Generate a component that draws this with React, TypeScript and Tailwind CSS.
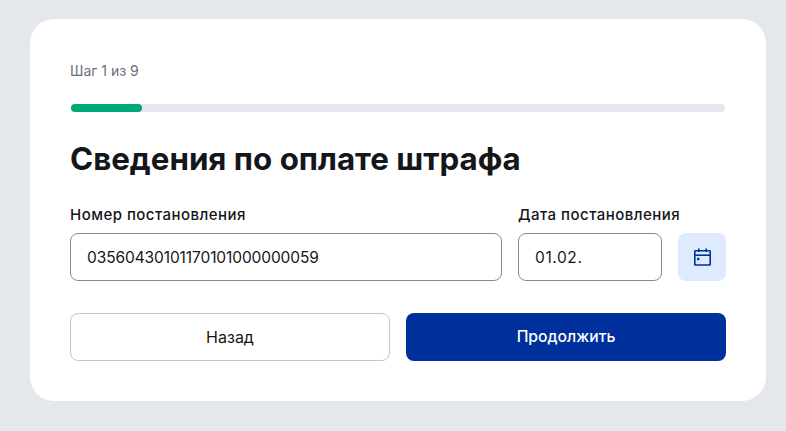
export default function App() {
  return (
    <div className="h-[431px] overflow-hidden bg-[#e4e7ec] pt-[19px] pl-[30px] font-['Inter',sans-serif]">
      <div className="h-[382px] w-[736px] rounded-[24px] bg-white px-[40px] pt-[43px]">
        <p className="translate-y-px text-[14px] leading-[16px] text-[#6b6f7c]">Шаг 1 из 9</p>

        <div className="mt-[26px] ml-px h-[8px] w-[654px] rounded-full bg-[#e4e7ec]">
          <div className="h-full w-[71px] rounded-full bg-[#00a876]" />
        </div>

        <h1 className="mt-[26px] text-[31.3px] leading-[42px] font-bold text-[#14161a]">
          Сведения по оплате штрафа
        </h1>

        <div className="mt-[26px] flex items-end">
          <div className="w-[432px]">
            <label className="mb-[9px] block text-[15px] leading-[18px] font-medium tracking-[0.47px] text-[#14161a]">
              Номер постановления
            </label>
            <input
              readOnly
              value="03560430101170101000000059"
              className="h-[48px] w-full rounded-[8px] border border-[#868b99] bg-white px-[16px] text-[15.5px] tracking-[-0.1px] text-[#14161a] outline-none"
            />
          </div>
          <div className="ml-[16px] w-[144px]">
            <label className="mb-[9px] block text-[15px] leading-[18px] font-medium tracking-[0.47px] whitespace-nowrap text-[#14161a]">
              Дата постановления
            </label>
            <input
              readOnly
              value="01.02."
              className="h-[48px] w-full rounded-[8px] border border-[#868b99] bg-white px-[16px] text-[15.5px] tracking-[0.6px] text-[#14161a] outline-none"
            />
          </div>
          <button className="ml-[16px] flex h-[48px] w-[48px] items-center justify-center rounded-[8px] bg-[#deebff]">
            <svg width="17" height="18" viewBox="0 0 17 18" fill="none" stroke="#00309c" strokeWidth="1.6">
              <rect x="0.8" y="2.8" width="15.4" height="14.2" rx="0.6" />
              <path d="M0.8 7.2h15.4" />
              <path d="M4.8 0.5v3.5M12.2 0.5v3.5" />
              <rect x="3" y="9.8" width="2.4" height="2.4" fill="#00309c" stroke="none" />
            </svg>
          </button>
        </div>

        <div className="mt-[32px] flex gap-[16px]">
          <button className="h-[48px] w-[320px] rounded-[8px] border border-[#c0c6d2] bg-white text-[16px] font-normal text-[#14161a]">
            Назад
          </button>
          <button className="h-[48px] w-[320px] rounded-[8px] bg-[#00309c] text-[15.7px] font-medium text-white">
            Продолжить
          </button>
        </div>
      </div>
    </div>
  );
}
